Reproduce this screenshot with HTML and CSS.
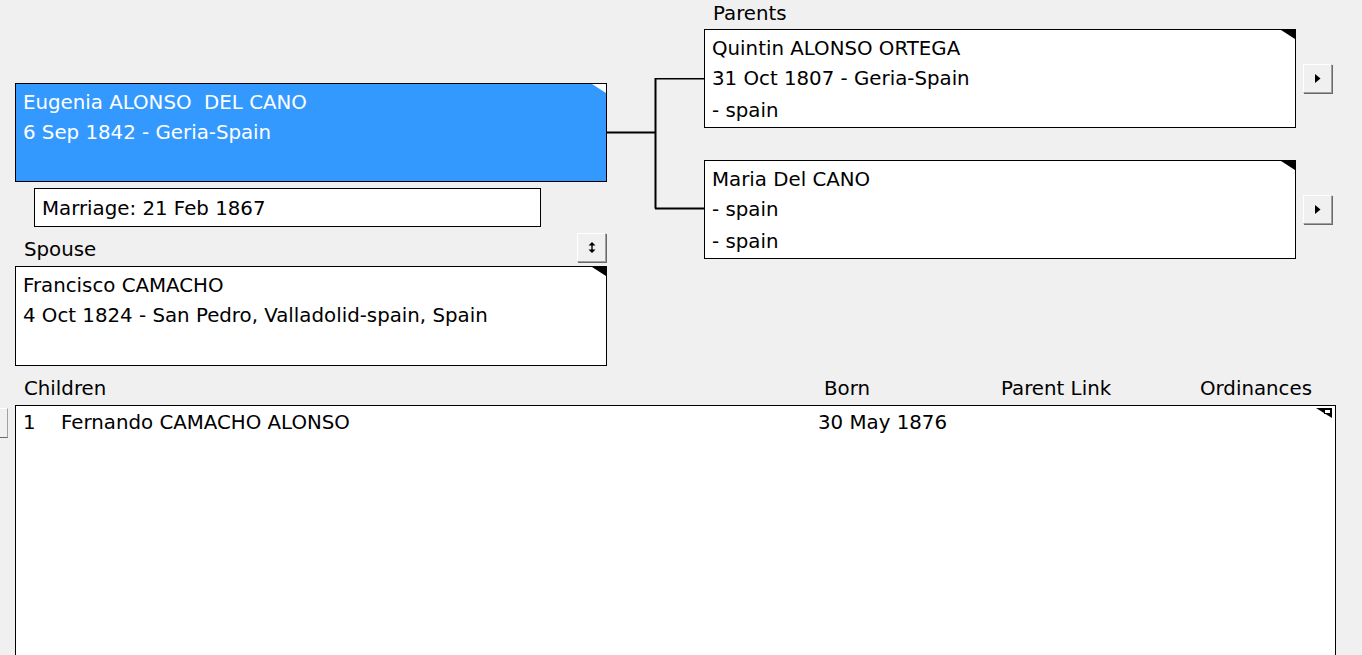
FILE: index.html
```html
<!DOCTYPE html>
<html>
<head>
<meta charset="utf-8">
<link rel="stylesheet" href="styles.css">
</head>
<body>
<div class="page">
  <div class="top">
    <svg class="connector" width="100" height="140" viewBox="0 0 100 140">
      <path d="M0 54.5 H48.5 M48.5 0 V130.5 M48 0.5 H97 M48 130.5 H97" stroke="#000" stroke-width="2" fill="none"/>
    </svg>
    <div class="left">
      <div class="card card-selected">
        <div class="line">Eugenia ALONSO&nbsp; DEL CANO</div>
        <div class="line">6 Sep 1842 - Geria-Spain</div>
        <span class="corner corner-white"></span>
      </div>
      <div class="marriage">Marriage: 21 Feb 1867</div>
      <div class="spouse-head">
        <span class="label">Spouse</span>
        <button class="btn btn-spin">
          <svg width="8" height="11" viewBox="0 0 8 11"><path d="M4 0 L7.5 3.5 H0.5 Z M0.5 7.5 H7.5 L4 11 Z M3.3 3 H4.7 V8 H3.3 Z" fill="#000"/></svg>
        </button>
      </div>
      <div class="card card-spouse">
        <div class="line">Francisco CAMACHO</div>
        <div class="line">4 Oct 1824 - San Pedro, Valladolid-spain, Spain</div>
        <span class="corner"></span>
      </div>
    </div>
    <div class="right">
      <div class="label parents-label">Parents</div>
      <div class="parent-row">
        <div class="card card-parent">
          <div class="line">Quintin ALONSO ORTEGA</div>
          <div class="line">31 Oct 1807 - Geria-Spain</div>
          <div class="line line-last">- spain</div>
          <span class="corner"></span>
        </div>
        <button class="btn btn-arrow"><svg width="6" height="9" viewBox="0 0 6 9"><path d="M0 0 L5.5 4.5 L0 9 Z" fill="#000"/></svg></button>
      </div>
      <div class="parent-row parent-row-2">
        <div class="card card-parent">
          <div class="line">Maria Del CANO</div>
          <div class="line">- spain</div>
          <div class="line line-last">- spain</div>
          <span class="corner"></span>
        </div>
        <button class="btn btn-arrow"><svg width="6" height="9" viewBox="0 0 6 9"><path d="M0 0 L5.5 4.5 L0 9 Z" fill="#000"/></svg></button>
      </div>
    </div>
  </div>

  <div class="children-head">
    <span class="col col-name">Children</span>
    <span class="col col-born">Born</span>
    <span class="col col-link">Parent Link</span>
    <span class="col col-ord">Ordinances</span>
  </div>
  <div class="children-wrap">
    <div class="side-tab"></div>
    <div class="children-list">
      <div class="child-row">
        <span class="c-num">1</span>
        <span class="c-name">Fernando CAMACHO ALONSO</span>
        <span class="c-born">30 May 1876</span>
      </div>
      <svg class="list-flag" width="16" height="10" viewBox="0 0 16 10">
        <path d="M0 0 H16 V10 Z" fill="#000"/>
        <rect x="8.5" y="1.5" width="6" height="4" fill="#fff" stroke="#000" stroke-width="1"/>
      </svg>
    </div>
  </div>
</div>
</body>
</html>
```

FILE: styles.css
```css
* { box-sizing: border-box; }
html, body {
  margin: 0;
  padding: 0;
  background: #f0f0f0;
  overflow: hidden;
}
body {
  font-family: "DejaVu Sans", Verdana, sans-serif;
  font-size: 19.8px;
  color: #000;
  width: 1362px;
  height: 655px;
}
.page { position: relative; }

.top {
  position: relative;
  display: flex;
  padding-left: 15px;
  height: 376px;
}
.connector {
  position: absolute;
  left: 607px;
  top: 78px;
}
.left {
  width: 592px;
  padding-top: 83px;
}
.card {
  position: relative;
  border: 1px solid #000;
  background: #fff;
  width: 592px;
  padding: 4px 0 0 7px;
}
.line {
  line-height: 30px;
  white-space: pre;
}
.line-last { margin-top: 2px; }
.card-selected {
  background: #3399ff;
  color: #fff;
  height: 99px;
}
.corner {
  position: absolute;
  right: 0;
  top: 0;
  width: 0;
  height: 0;
  border-top: 9px solid #000;
  border-left: 14px solid transparent;
}
.corner-white { border-top-color: #fff; }

.marriage {
  margin: 6px 0 0 19px;
  width: 507px;
  height: 39px;
  border: 1px solid #000;
  background: #fff;
  padding-left: 7px;
  line-height: 39px;
}
.spouse-head {
  display: flex;
  justify-content: space-between;
  align-items: flex-start;
  height: 39px;
  padding-left: 9px;
  padding-right: 1px;
}
.label { line-height: 24px; }
.spouse-head .label { margin-top: 11px; }
.btn {
  display: flex;
  align-items: center;
  justify-content: center;
  width: 29px;
  height: 29px;
  padding: 0;
  background: #f0f0f0;
  border: 1px solid;
  border-color: #fff #a0a0a0 #a0a0a0 #fff;
  box-shadow: 1px 1px 0 #696969;
}
.btn-spin { margin-top: 6px; }
.card-spouse { height: 100px; }

.right {
  margin-left: 97px;
  width: 640px;
}
.parents-label {
  padding-left: 9px;
  height: 29px;
  line-height: 28px;
}
.parent-row {
  display: flex;
  align-items: flex-start;
  gap: 7px;
}
.parent-row-2 { margin-top: 32px; }
.card-parent { height: 99px; flex: none; }
.btn-arrow { margin-top: 35px; flex: none; }

.children-head {
  position: relative;
  height: 29px;
  line-height: 26px;
}
.col { position: absolute; top: 0; }
.col-name { left: 24px; }
.col-born { left: 824px; }
.col-link { left: 1001px; }
.col-ord { left: 1200px; }

.children-wrap {
  display: flex;
  align-items: flex-start;
}
.side-tab {
  width: 8px;
  height: 30px;
  margin-top: 3px;
  margin-right: 7px;
  background: #f0f0f0;
  border: 1px solid;
  border-left: none;
  border-color: #fff #a0a0a0 #696969 #fff;
}
.children-list {
  position: relative;
  width: 1321px;
  height: 260px;
  background: #fff;
  border: 1px solid #000;
  border-bottom: none;
  padding: 5px 0 0 7px;
}
.child-row {
  position: relative;
  height: 24px;
  line-height: 24px;
}
.child-row span { position: absolute; top: 0; }
.c-num { left: 0; }
.c-name { left: 38px; }
.c-born { left: 795px; }
.list-flag {
  position: absolute;
  right: 3px;
  top: 2px;
}
```
